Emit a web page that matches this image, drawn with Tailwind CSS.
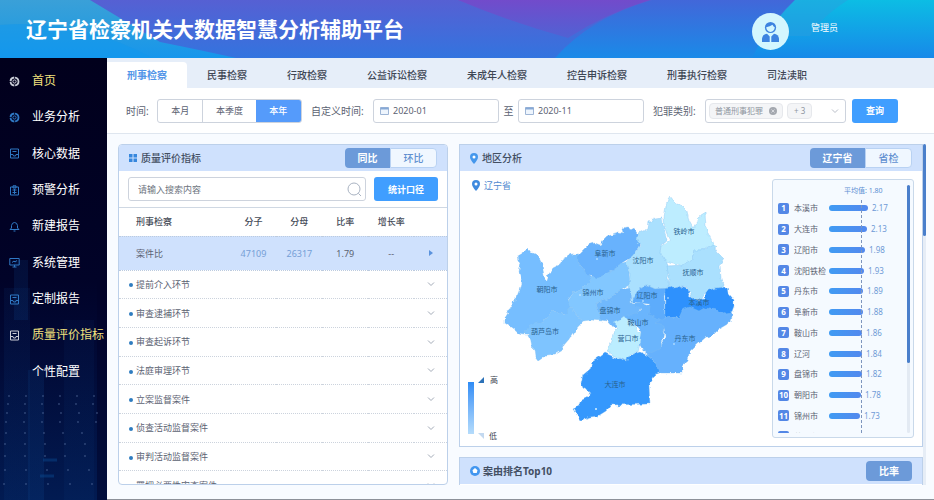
<!DOCTYPE html>
<html lang="zh-CN">
  <head>
    <meta charset="UTF-8" />
    <meta name="viewport" content="width=device-width, initial-scale=1.0" />
    <title>辽宁省检察机关大数据智慧分析辅助平台</title>
    <script src="https://cdn.jsdelivr.net/npm/@tailwindcss/browser@4"></script>
  </head>
  <body class="flex h-screen flex-col overflow-hidden bg-[#f8fbff] font-['Noto_Sans','Noto_Sans_CJK_SC',sans-serif] text-[9px] leading-none text-[#5b6272]">
    <!-- 顶部 -->
    <header class="relative flex h-[58px] shrink-0 items-center pr-24 pl-[26px] text-white">
      <svg class="absolute inset-0 -z-10 h-full w-full" viewBox="0 0 934 58" preserveAspectRatio="none" aria-hidden="true">
        <defs>
          <linearGradient id="base" x1="0" y1="0" x2="0" y2="1"><stop offset="0" stop-color="#5660d3" /><stop offset="1" stop-color="#3374df" /></linearGradient>
          <linearGradient id="left" x1="0" y1="0" x2="0" y2="1"><stop offset="0" stop-color="#3aa0d8" /><stop offset=".4" stop-color="#2c9ddd" /><stop offset="1" stop-color="#1696ec" /></linearGradient>
          <linearGradient id="purple" x1="0" y1="0" x2="0" y2="1"><stop offset="0" stop-color="#724bcb" /><stop offset="1" stop-color="#5062d4" /></linearGradient>
          <linearGradient id="blue" x1="0" y1="0" x2="0" y2="1"><stop offset="0" stop-color="#4267d9" /><stop offset="1" stop-color="#1a8ae8" /></linearGradient>
          <linearGradient id="teal" x1="0" y1="0" x2="0" y2="1"><stop offset="0" stop-color="#0cbde4" /><stop offset="1" stop-color="#1789e9" /></linearGradient>
        </defs>
        <rect width="934" height="58" fill="url(#base)" />
        <path d="M90 0L160 42Q200 50 236 58H0V0Z" fill="url(#left)" />
        <path d="M0 25Q80 18 152 58H0Z" fill="#0f98ee" opacity=".5" />
        <path d="M458 0H650Q605 14 568 38Q510 22 458 0Z" fill="url(#purple)" />
        <path d="M555 58Q590 18 652 0H934V58Z" fill="url(#blue)" />
        <path d="M795 0H934V58H752Q765 30 795 0Z" fill="url(#teal)" />
        <path d="M795 0H848Q820 18 810 36H768Q778 14 795 0Z" fill="#2c9ddd" opacity=".45" />
      </svg>
      <h1 class="text-[21px] leading-7 font-bold">辽宁省检察机关大数据智慧分析辅助平台</h1>
      <div class="ml-auto flex items-center gap-[22px]">
        <svg class="mt-1 h-[37px] w-[37px]" viewBox="0 0 37 37" aria-hidden="true">
          <circle cx="18.500" cy="18.500" r="18.500" fill="#d3f6fe" />
          <circle cx="18.500" cy="14.500" r="5.600" fill="#3d83e0" />
          <path d="M14.200 14.200Q18 13.800 20.500 11.800Q21.500 13.800 22.800 14.300Q22.300 18.600 18.500 18.900Q14.700 18.600 14.200 14.200Z" fill="#d3f6fe" />
          <path d="M10 29V25.500Q10.500 21.500 15 20.700L17.700 23.500V29Z" fill="#3d83e0" />
          <path d="M27 29V25.500Q26.500 21.500 22 20.700L19.300 23.500V29Z" fill="#3d83e0" />
        </svg>
        <span class="-mt-1">管理员</span>
      </div>
    </header>

    <div class="flex min-h-0 flex-1">
      <!-- 侧边栏 -->
      <nav class="relative w-[107px] shrink-0 overflow-hidden bg-linear-to-b from-[#01001c] via-[#010328] to-[#021b52] pt-[5px]">
        <svg class="absolute bottom-0 left-0 h-[240px] w-full" viewBox="0 0 107 240" aria-hidden="true">
          <defs>
            <linearGradient id="tower" x1="0" y1="0" x2="0" y2="1"><stop offset="0" stop-color="#0a3270" stop-opacity=".4" /><stop offset="1" stop-color="#0a3c80" stop-opacity=".4" /></linearGradient>
          </defs>
          <rect x="4" y="28" width="26" height="212" fill="url(#tower)" opacity=".4" />
          <rect x="14" y="0" width="14" height="60" fill="url(#tower)" opacity=".6" />
          <rect x="28" y="110" width="16" height="130" fill="url(#tower)" opacity=".7" />
          <rect x="64" y="60" width="30" height="180" fill="url(#tower)" opacity=".3" />
          <path d="M43 200H57M40 216H54" stroke="#0b5099" stroke-width="3" opacity=".4" />
          <path d="M102 0V240" stroke="#010328" stroke-width="10" opacity=".5" />
          <g fill="none" stroke="#6d86b5" stroke-width="2" stroke-linecap="round" opacity=".4">
            <path d="M9 136H100" stroke-dasharray="0 17" />
            <path d="M8 144H100" stroke-dasharray="0 17" />
            <path d="M7 153H100" stroke-dasharray="0 18" />
            <path d="M6 162H100" stroke-dasharray="0 18" />
            <path d="M6 173H100" stroke-dasharray="0 19" />
            <path d="M5 184H101" stroke-dasharray="0 20" />
            <path d="M5 196H102" stroke-dasharray="0 20" />
            <path d="M5 210H102" stroke-dasharray="0 21" />
            <path d="M4 224H102" stroke-dasharray="0 22" />
          </g>
        </svg>
        <ul id="menu" class="relative grid h-[327px] grid-rows-9"></ul>
      </nav>

      <main class="flex min-w-0 flex-1 flex-col">
        <!-- 业务标签 -->
        <div class="flex h-[30px] shrink-0 items-end bg-[#e6eef9] text-[10px] font-medium whitespace-nowrap text-[#3e4654]">
          <button class="h-[26px] rounded-tr-sm bg-white px-5 font-bold text-[#5295e8]">刑事检察</button>
          <button class="h-[26px] px-5">民事检察</button>
          <button class="h-[26px] px-5">行政检察</button>
          <button class="h-[26px] px-5">公益诉讼检察</button>
          <button class="h-[26px] px-5">未成年人检察</button>
          <button class="h-[26px] px-5">控告申诉检察</button>
          <button class="h-[26px] px-5">刑事执行检察</button>
          <button class="h-[26px] px-5">司法渎职</button>
        </div>

        <!-- 查询条件 -->
        <form class="flex h-[46px] shrink-0 items-center border-b border-[#dfe6ef] bg-white pl-[19px] whitespace-nowrap" onsubmit="return false">
          <span class="w-[31px] text-[10px]">时间:</span>
          <div class="flex h-6 w-[145px] overflow-hidden rounded-[3px] border border-[#cdd3dd]">
            <button type="button" class="flex-[45]">本月</button>
            <button type="button" class="flex-[53] border-l border-[#cdd3dd]">本季度</button>
            <button type="button" class="flex-[46] bg-[#559bfb] font-medium text-white">本年</button>
          </div>
          <label for="from" class="ml-[9px] w-[62px] text-[10px]">自定义时间:</label>
          <div class="relative h-6 w-[126px]">
            <input id="from" type="text" value="2020-01" class="h-full w-full rounded-[3px] border border-[#cdd3dd] bg-white pl-[19px]" />
            <svg class="absolute top-[7px] left-[7px] h-[9px] w-[9px]" viewBox="0 0 9 9" fill="none" stroke="#9fb6d6" aria-hidden="true"><path d="M.5 1.500H8.500V8.500H.5Z" fill="#eef5fd" /><path d="M.5 2.500H8.500" stroke-width="2" stroke="#86a9d6" /></svg>
          </div>
          <label for="to" class="w-[19px] text-center text-[10px]">至</label>
          <div class="relative h-6 w-[126px]">
            <input id="to" type="text" value="2020-11" class="h-full w-full rounded-[3px] border border-[#cdd3dd] bg-white pl-[19px]" />
            <svg class="absolute top-[7px] left-[7px] h-[9px] w-[9px]" viewBox="0 0 9 9" fill="none" stroke="#9fb6d6" aria-hidden="true"><path d="M.5 1.500H8.500V8.500H.5Z" fill="#eef5fd" /><path d="M.5 2.500H8.500" stroke-width="2" stroke="#86a9d6" /></svg>
          </div>
          <label for="crime" class="ml-[9px] w-[52px] text-[10px]">犯罪类别:</label>
          <div class="relative h-6 w-[141px]">
            <select id="crime" class="h-full w-full appearance-none rounded-[3px] border border-[#cdd3dd] bg-white text-transparent">
              <option>普通刑事犯罪</option>
            </select>
            <div class="pointer-events-none absolute inset-0 flex items-center gap-1 px-1 text-[#8f959f]">
              <span class="flex h-4 items-center gap-1.5 rounded-sm border border-[#e6e8ec] bg-[#f4f5f7] px-[5px] text-[8px]">普通刑事犯罪
                <svg class="h-2 w-2" viewBox="0 0 8 8" aria-hidden="true"><circle cx="4" cy="4" r="4" fill="#a4a8af" /><path d="M2.500 2.500L5.500 5.500M5.500 2.500L2.500 5.500" stroke="#e3e5e8" stroke-width=".8" /></svg>
              </span>
              <span class="flex h-4 items-center rounded-sm border border-[#e6e8ec] bg-[#f4f5f7] px-1.5 text-[8px]">+ 3</span>
              <svg class="mr-[3px] ml-auto h-2 w-2" viewBox="0 0 8 8" fill="none" stroke="#b9bec8" aria-hidden="true"><path d="M1 2.500L4 5.500L7 2.500" /></svg>
            </div>
          </div>
          <button class="ml-1.5 h-6 w-[46px] rounded-[3px] bg-[#409eff] font-bold text-white">查询</button>
        </form>

        <div class="grid min-h-0 flex-1 grid-cols-[330fr_464fr] gap-[11px] border-b border-[#8d9199] px-[11px] pt-2.5 pb-3.5">
          <!-- 质量评价指标 -->
          <section class="flex min-h-0 flex-col overflow-hidden rounded-sm border border-[#bcd0ea] bg-white">
            <div class="flex h-[26px] shrink-0 items-center bg-[#cfe1fd] pr-2.5 pl-2.5">
              <svg class="mr-1 h-2 w-2" viewBox="0 0 8 8" fill="#3687dd" aria-hidden="true"><path d="M0 0H3.500V3.500H0ZM4.500 0H8V3.500H4.500ZM0 4.500H3.500V8H0ZM4.500 4.500H8V8H4.500Z" /></svg>
              <h2 class="text-[10px] font-medium text-[#434f63]">质量评价指标</h2>
              <div class="ml-auto flex h-5 w-[92px] text-[10px] font-medium">
                <button class="flex-1 rounded-l-sm bg-[#6c9ad9] font-bold text-white">同比</button>
                <button class="flex-1 rounded-r-sm border border-[#b9d2f3] bg-[#f0f7ff] text-[#5f8fd0]">环比</button>
              </div>
            </div>
            <div class="flex h-[37px] shrink-0 items-center gap-2 border-b border-[#cfd8e3] px-[9px]">
              <div class="relative h-6 flex-1">
                <input type="search" aria-label="搜索" placeholder="请输入搜索内容" class="h-full w-full rounded-[3px] border border-[#cdd3dd] px-[9px] placeholder:text-[#6d7480]" />
                <svg class="absolute top-[5px] right-1 h-[15px] w-[15px]" viewBox="0 0 15 15" fill="none" stroke="#a9b3c2" aria-hidden="true"><circle cx="7" cy="7" r="6" /><path d="M11.300 11.300L14 14" /></svg>
              </div>
              <button class="h-6 w-16 rounded-[3px] bg-[#409eff] font-bold text-white">统计口径</button>
            </div>
            <div class="min-h-0 flex-1 overflow-hidden">
              <table class="h-[calc(100%+16px)] w-full table-fixed border-collapse text-center">
                <colgroup>
                  <col class="w-[34%]" /><col class="w-[14%]" /><col class="w-[14%]" /><col class="w-[14%]" /><col class="w-[14%]" /><col />
                </colgroup>
                <thead class="text-[#454b57]">
                  <tr class="h-7">
                    <th class="pl-[17px] text-left font-medium">刑事检察</th>
                    <th class="font-medium">分子</th>
                    <th class="font-medium">分母</th>
                    <th class="font-medium">比率</th>
                    <th class="font-medium">增长率</th>
                    <td></td>
                  </tr>
                </thead>
                <tbody id="stages">
                  <tr class="h-[34px] border-y border-dotted border-[#bccbdf] bg-[#cfe1fd]">
                    <td class="pl-[17px] text-left">案件比</td>
                    <td><a href="#" class="text-[9px] text-[#769fd6]">47109</a></td>
                    <td><a href="#" class="text-[9px] text-[#769fd6]">26317</a></td>
                    <td class="text-[9px]">1.79</td>
                    <td class="text-[9px]">--</td>
                    <td><svg class="mx-auto h-1.5 w-1" viewBox="0 0 4 6" fill="#5b93dd" aria-hidden="true"><path d="M0 0L4 3L0 6Z" /></svg></td>
                  </tr>
                </tbody>
              </table>
            </div>
          </section>

          <div class="relative min-h-0">
            <div class="flex h-full flex-col gap-2.5 overflow-hidden">
              <!-- 地区分析 -->
              <section class="shrink-0 border border-[#bcd0ea] bg-white">
                <div class="flex h-[26px] items-center bg-[#cfe1fd] pr-2.5 pl-2.5">
                  <svg class="mr-1 h-[11px] w-2" viewBox="0 0 8 11" aria-hidden="true"><path d="M4 0A4 4 0 0 1 8 4Q8 6.500 4 11Q0 6.500 0 4A4 4 0 0 1 4 0Z" fill="#4597ec" /><circle cx="4" cy="4" r="1.500" fill="#fff" /></svg>
                  <h2 class="text-[10px] font-medium text-[#434f63]">地区分析</h2>
                  <div class="ml-auto flex h-5 w-[102px] text-[10px] font-medium">
                    <button class="flex-[56] rounded-l-sm bg-[#6c9ad9] font-bold text-white">辽宁省</button>
                    <button class="flex-[46] rounded-r-sm border border-[#b9d2f3] bg-[#f0f7ff] text-[#5f8fd0]">省检</button>
                  </div>
                </div>
                <div class="flex">
                  <div class="relative h-[275px] min-w-0 flex-1">
                    <svg class="h-full w-full" viewBox="460 171 312 275" role="img" aria-label="辽宁省地图">
                      <defs>
                        <filter id="coast" x="-5%" y="-5%" width="110%" height="110%">
                          <feTurbulence type="fractalNoise" baseFrequency=".18" numOctaves="2" seed="4" result="noise" />
                          <feDisplacementMap in="SourceGraphic" in2="noise" scale="5" xChannelSelector="R" yChannelSelector="G" />
                        </filter>
                      </defs>
                      <g filter="url(#coast)" stroke="#7fbdf0" stroke-opacity=".5" stroke-width=".7" stroke-linejoin="round">
                        <path fill="#76beff" d="M527 248L523 252L518 255L519 260L521 262L519 272L522 283L520 290L517 298L512 302L513 306L507 310L508 313L505 318L505 323L512 328L518 333L524 334L530 326L543 321L553 311L566 314L572 307L568 300L574 292L588 285L592 278L584 270L578 262L578 254L572 254L562 260L559 265L553 268L549 274L547 280L545 280L542 265L537 255L531 252Z" />
                        <path fill="#7ec4ff" d="M524 334L528 334L530 341L531 347L534 350L535 357L538 361L547 355L555 354L562 350L564 345L570 338L576 329L583 321L577 316L571 308L565 314L553 311L543 321L530 325Z" />
                        <path fill="#82c7ff" d="M568 301L574 292L588 285L592 277L600 276L611 271L619 264L626 262L629 272L630 284L620 290L608 299L596 303L598 312L603 321L592 320L583 321L577 316L571 308Z" />
                        <path fill="#67b2fd" d="M578 255L588 245L595 243L600 245L604 239L608 235L619 232L623 233L622 228L628 227L635 230L638 235L641 238L639 246L633 256L620 264L611 271L598 278L587 275L584 270L578 262Z" />
                        <path fill="#70b8fc" d="M596 303L608 299L620 290L630 288L631 303L641 306L637 316L626 318L622 326L614 328L608 321L602 320L598 312Z" />
                        <path fill="#aae0fe" d="M638 233L648 228L649 222L655 219L662 218L664 230L667 240L661 245L660 253L667 262L669 270L667 278L669 288L655 289L646 285L639 289L632 303L629 286L630 275L626 262L633 255L640 246L637 240Z" />
                        <path fill="#bdedff" d="M664 218L666 206L668 199L670 196L674 201L682 206L687 211L689 221L693 228L700 216L705 213L706 226L708 233L713 243L717 248L707 247L702 250L694 250L692 260L682 265L673 263L666 261L660 253L661 246L670 240L665 230Z" />
                        <path fill="#aae0fe" d="M667 266L682 265L692 260L694 250L702 250L713 245L718 253L724 259L720 265L721 278L725 287L716 288L706 291L702 299L694 300L687 288L678 286L668 288L669 277Z" />
                        <path fill="#5dacfc" d="M632 302L639 289L646 285L655 289L668 288L664 296L665 319L659 323L648 324L643 310L650 304L641 303Z" />
                        <path fill="#6bb5fd" d="M630 303L641 303L650 306L649 315L660 319L665 325L663 337L661 348L655 356L646 354L640 344L642 332L634 322L626 321L622 316L637 314L641 309Z" />
                        <path fill="#66b1fd" d="M665 318L679 317L682 306L690 303L699 306L706 303L716 305L730 312L732 315L731 322L719 329L712 336L706 337L697 345L689 353L688 361L682 366L682 373L659 373L655 362L647 355L661 348L665 337L664 325L655 323Z" />
                        <path fill="#2e91fd" d="M665 289L678 286L687 289L689 295L696 300L705 299L706 291L716 288L727 287L728 293L734 300L734 306L731 314L724 315L716 309L706 307L699 311L690 307L682 310L679 317L665 318Z" />
                        <path fill="#bbedff" d="M613 322L620 319L624 316L628 321L634 322L637 331L642 333L640 344L638 352L630 354L627 361L619 358L607 352L612 340L613 332L619 328Z" />
                        <path fill="#3698fd" d="M605 353L614 357L627 361L628 356L640 352L648 356L655 362L660 373L655 374L649 385L650 404L611 405L606 411L598 416L590 417L581 420L577 413L574 408L579 405L580 401L588 397L590 392L583 388L581 383L583 375L590 369L592 362L600 357Z" />
                      </g>
                      <g fill="#d8f3ff"><circle cx="597" cy="259" r=".8" /><circle cx="668" cy="298" r=".8" /><circle cx="643" cy="301" r=".8" /><circle cx="596" cy="409" r="1" /><circle cx="674" cy="344" r=".8" /><circle cx="580" cy="295" r=".8" /></g>
                      <g id="cities" class="fill-[#2a628f] text-[7px]" text-anchor="middle"></g>
                    </svg>
                    <a href="#" class="absolute top-[9px] left-3 flex items-center gap-1 text-[#5089cf]">
                      <svg class="h-[11px] w-2" viewBox="0 0 8 11" aria-hidden="true"><path d="M4 0A4 4 0 0 1 8 4Q8 6.500 4 11Q0 6.500 0 4A4 4 0 0 1 4 0Z" fill="#3f8ade" /><circle cx="4" cy="4" r="1.500" fill="#fff" /></svg>
                      辽宁省
                    </a>
                    <!-- 图例 -->
                    <div class="absolute bottom-1.5 left-2 flex items-center gap-1 text-[8px] text-[#3b424e]">
                      <span class="h-[52px] w-1.5 bg-linear-to-b from-[#2e8cf5] to-[#b5dcfb]"></span>
                      <div class="flex h-16 flex-col justify-between">
                        <span class="flex items-center gap-1.5"><svg class="h-1.5 w-1.5" viewBox="0 0 6 6" aria-hidden="true"><path d="M6 0V6H0Z" fill="#2c72b8" /></svg>高</span>
                        <span class="flex items-center gap-[5px]"><svg class="h-1.5 w-1.5" viewBox="0 0 6 6" aria-hidden="true"><path d="M0 0H6V6Z" fill="#c3d9f0" /></svg>低</span>
                      </div>
                    </div>
                  </div>
                  <!-- 排名 -->
                  <div class="relative my-2 mr-2 h-[259px] w-[142px] overflow-hidden rounded-[3px] border border-[#c9d9ea] bg-[#f5faff] py-1">
                    <div class="relative h-full overflow-hidden">
                      <p class="mt-[3px] ml-[71px] text-[7px] leading-2 whitespace-nowrap text-[#5c8fd3]">平均值: 1.80</p>
                      <ol id="rank" class="mt-[3px] grid h-[249px] grid-rows-12 pl-[5px]"></ol>
                      <span class="absolute top-4 bottom-0 left-[88px] border-l border-dashed border-[#7d95bd]"></span>
                    </div>
                    <span class="absolute top-[5px] right-[3px] bottom-1 w-[3px] rounded-full bg-[#e3eaf3]"></span>
                    <span class="absolute top-[5px] right-[3px] h-[178px] w-[3px] rounded-full bg-[#4a7fcb]"></span>
                  </div>
                </div>
              </section>

              <!-- 案由排名 -->
              <section class="shrink-0 border border-[#bcd0ea] bg-white">
                <div class="flex h-[26px] items-center bg-[#cfe1fd] px-2.5">
                  <svg class="mr-[3px] h-2.5 w-2.5" viewBox="0 0 10 10" aria-hidden="true"><circle cx="5" cy="5" r="5" fill="#4296ef" /><path d="M5 2L7.500 4.200L6.700 7H3.300L2.500 4.200Z" fill="#fff" /></svg>
                  <h2 class="text-[10px] font-bold text-[#434f63]">案由排名Top10</h2>
                  <button class="ml-auto h-5 w-[46px] rounded-sm bg-[#6c9ad9] text-[10px] font-bold text-white">比率</button>
                </div>
                <div class="h-40"></div>
              </section>
            </div>
            <span class="absolute inset-y-0 -right-[3px] w-[3px] bg-[#e6edf6]"></span>
            <span class="absolute top-0 -right-[3px] h-[92px] w-[3px] rounded-full bg-[#4a7fcb]"></span>
          </div>
        </div>
      </main>
    </div>

    <script>
      const ring = '<circle cx="5.500" cy="5.500" r="4" stroke-width="1.800" stroke-dasharray="5.500 .8" /><circle cx="5.500" cy="5.500" r="1.600" />';
      const box = '<path d="M1.500 1H9.500V10H1.500ZM1.500 6.500H4L4.500 8H6.500L7 6.500H9.500M3.500 3.500H7.500" />';
      const clip = '<path d="M1.500 2H9.500V10H1.500ZM4 .8H7V3H4ZM3.500 5H7.500M3.500 7.500H7.500M5.500 4V9" />';
      const bell = '<path d="M1 8.500H10L8.500 7V4.500Q8 1.500 5.500 1.500Q3 1.500 2.500 4.500V7ZM4.500 10H6.500" />';
      const screen = '<path d="M.8 1.500H10.200V8H.8ZM3.500 10H7.500M5.500 8V10M3 5.500L5 4L6 5L8 3.500" />';

      const menu = [
        ['首页', ring, 'text-[#f3e27e]', 'text-[#c9ccd6]'],
        ['业务分析', ring, 'text-white', 'text-[#2f78c4]'],
        ['核心数据', box, 'text-white', 'text-[#2f78c4]'],
        ['预警分析', clip, 'text-white', 'text-[#2f78c4]'],
        ['新建报告', bell, 'text-white', 'text-[#2f78c4]'],
        ['系统管理', screen, 'text-white', 'text-[#2f78c4]'],
        ['定制报告', box, 'text-white', 'text-[#2f78c4]'],
        ['质量评价指标', box, 'text-[#f3e27e]', 'text-[#c9ccd6]'],
        ['个性配置', '', 'text-white', 'text-white'],
      ];
      document.getElementById('menu').innerHTML = menu.map(([name, icon, color, iconColor]) => `
        <li class="flex items-center"><a href="#" class="flex items-center gap-3 pl-[9px] text-[12px] whitespace-nowrap ${color}">
          <svg class="h-[11px] w-[11px] shrink-0 ${iconColor}" viewBox="0 0 11 11" fill="none" stroke="currentColor" aria-hidden="true">${icon}</svg>${name}</a></li>`).join('');

      const stages = ['提前介入环节', '审查逮捕环节', '审查起诉环节', '法庭审理环节', '立案监督案件', '侦查活动监督案件', '审判活动监督案件', '羁押必要性审查案件'];
      document.getElementById('stages').insertAdjacentHTML('beforeend', stages.map(name => `
        <tr class="border-b border-dotted border-[#ccd3dd]">
          <td colspan="5" class="pl-2.5 text-left"><span class="mr-[3px] inline-block h-1 w-1 rounded-full bg-[#2f7cc0] align-middle"></span>${name}</td>
          <td><svg class="mx-auto h-2 w-2" viewBox="0 0 8 8" fill="none" stroke="#a3abb8" aria-hidden="true"><path d="M1 2.500L4 5.500L7 2.500" /></svg></td>
        </tr>`).join(''));

      const cities = [['铁岭市', 684, 231], ['阜新市', 605, 253], ['沈阳市', 643, 260], ['抚顺市', 693, 272], ['朝阳市', 547, 289], ['锦州市', 593, 292], ['辽阳市', 647, 295], ['盘锦市', 610, 310], ['鞍山市', 638, 322], ['本溪市', 699, 302], ['葫芦岛市', 545, 331], ['营口市', 628, 338], ['丹东市', 685, 338], ['大连市', 615, 384]];
      document.getElementById('cities').innerHTML = cities.map(([name, x, y]) => `<text x="${x}" y="${y + 3}">${name}</text>`).join('');

      const rank = [['本溪市', 2.17], ['大连市', 2.13], ['辽阳市', 1.98], ['沈阳铁检', 1.93], ['丹东市', 1.89], ['阜新市', 1.88], ['鞍山市', 1.86], ['辽河', 1.84], ['盘锦市', 1.82], ['朝阳市', 1.78], ['锦州市', 1.73], ['营口市', 1.70]];
      document.getElementById('rank').innerHTML = rank.map(([name, value], i) => `
        <li class="flex items-center text-[8px] whitespace-nowrap">
          <span class="mr-[5px] flex h-[11px] w-[11px] items-center justify-center rounded-xs bg-[#5387e6] font-bold text-white">${i + 1}</span>
          <span class="w-[35px]">${name}</span>
          <span class="mr-1 h-1.5 rounded-full bg-linear-to-r from-[#3f9bf3] to-[#5288ee]" style="width: ${Math.round(value * 18)}px"></span>
          <span class="text-[#6f9ad6]">${value.toFixed(2)}</span>
        </li>`).join('');
    </script>
  </body>
</html>
